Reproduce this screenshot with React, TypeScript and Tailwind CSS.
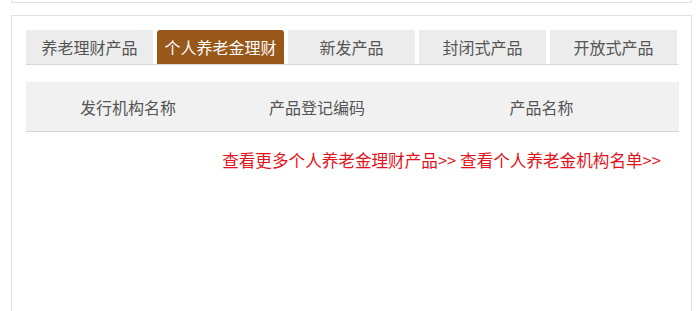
const tabs = ["养老理财产品", "个人养老金理财", "新发产品", "封闭式产品", "开放式产品"];

export default function App() {
  return (
    <div
      className="h-[311px] w-[700px] overflow-hidden bg-white"
      style={{ fontFamily: '"Noto Sans CJK SC", "Noto Sans", sans-serif' }}
    >
      <div className="ml-[11px] mr-[8px] h-[3px] border-x border-b border-[#e2e2e2]" />
      <div className="ml-[11px] mr-[8px] mt-[12px] h-[320px] border border-[#e2e2e2] pl-[14px] pr-[12px] pt-[14px]">
        <div className="flex gap-[4px] border-b border-[#d8d8d8]">
          {tabs.map((t, i) => (
            <div
              key={t}
              className={
                i === 1
                  ? "flex h-[34px] w-[127px] items-center justify-center rounded-t-[3px] bg-[#98581a] text-[16px] text-white"
                  : "flex h-[34px] w-[127px] items-center justify-center bg-[#ececec] text-[16px] text-[#555]"
              }
            >
              {t}
            </div>
          ))}
        </div>
        <div className="mt-[17px] flex h-[50px] items-center border-b border-[#d6d6d6] bg-[#f1f1f1] text-[16px] text-[#555]">
          <div className="w-[204px] text-center">发行机构名称</div>
          <div className="w-[174px] text-center">产品登记编码</div>
          <div className="flex-1 text-center">产品名称</div>
        </div>
        <div className="mt-[17px] pr-[18px] text-right text-[16.6px] leading-[22px] text-[#e3131b]">
          <a>查看更多个人养老金理财产品&gt;&gt;</a> <a>查看个人养老金机构名单&gt;&gt;</a>
        </div>
      </div>
    </div>
  );
}
